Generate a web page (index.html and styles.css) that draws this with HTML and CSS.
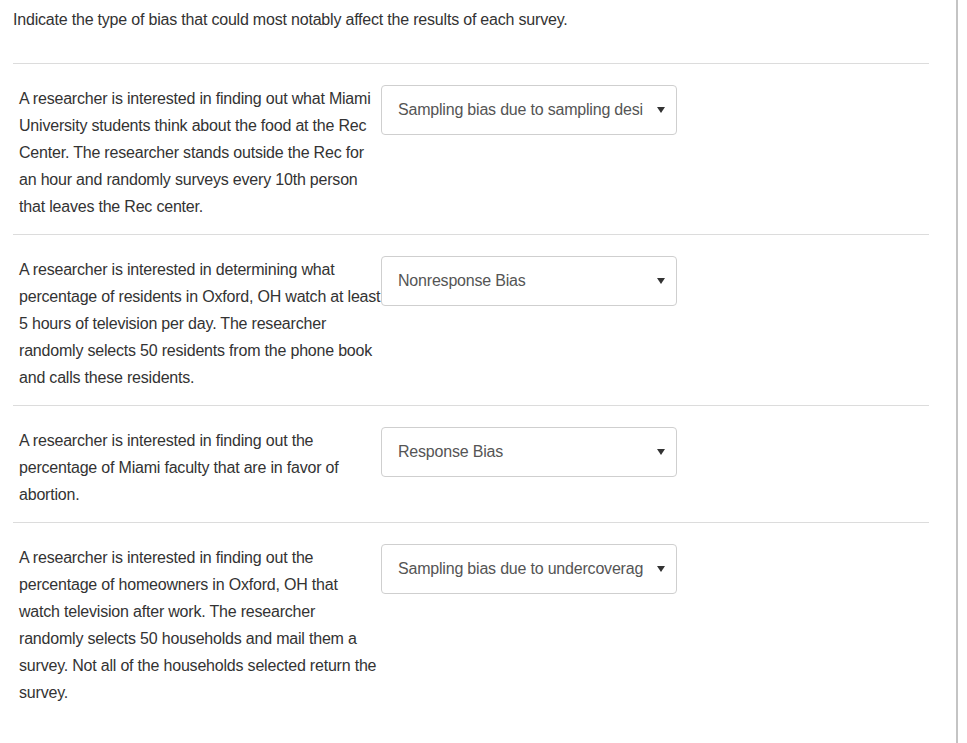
FILE: index.html
```html
<!DOCTYPE html>
<html>
<head>
<meta charset="utf-8">
<link rel="stylesheet" href="styles.css">
</head>
<body>
<div class="page">
  <p class="prompt">Indicate the type of bias that could most notably affect the results of each survey.</p>
  <div class="list">
    <div class="row">
      <div class="question">A researcher is interested in finding out what Miami University students think about the food at the Rec Center. The researcher stands outside the Rec for an hour and randomly surveys every 10th person that leaves the Rec center.</div>
      <div class="select"><span class="value">Sampling bias due to sampling desi</span><span class="arrow"></span></div>
    </div>
    <div class="row">
      <div class="question">A researcher is interested in determining what percentage of residents in Oxford, OH watch at least 5 hours of television per day. The researcher randomly selects 50 residents from the phone book and calls these residents.</div>
      <div class="select"><span class="value">Nonresponse Bias</span><span class="arrow"></span></div>
    </div>
    <div class="row">
      <div class="question">A researcher is interested in finding out the percentage of Miami faculty that are in favor of abortion.</div>
      <div class="select"><span class="value">Response Bias</span><span class="arrow"></span></div>
    </div>
    <div class="row last">
      <div class="question">A researcher is interested in finding out the percentage of homeowners in Oxford, OH that watch television after work. The researcher randomly selects 50 households and mail them a survey. Not all of the households selected return the survey.</div>
      <div class="select"><span class="value">Sampling bias due to undercoverag</span><span class="arrow"></span></div>
    </div>
  </div>
</div>
</body>
</html>
```
FILE: styles.css
```css
html, body {
  margin: 0;
  padding: 0;
  background: #fff;
}
body {
  font-family: "Liberation Sans", Arial, sans-serif;
  color: #333;
  font-size: 16px;
  letter-spacing: -0.2px;
}
.page {
  width: 958px;
  height: 743px;
  box-sizing: border-box;
  border-right: 2px solid #c4c4c4;
  padding: 8px 0 0 13px;
}
.prompt {
  margin: 0;
  line-height: 24px;
  height: 55px;
}
.list {
  width: 916px;
}
.row {
  display: flex;
  align-items: flex-start;
  border-top: 1px solid #dcdcdc;
  padding: 21px 0 14px 6px;
}
.question {
  width: 362px;
  line-height: 27px;
  flex-shrink: 0;
}
.select {
  width: 296px;
  height: 50px;
  box-sizing: border-box;
  border: 1px solid #cfcfcf;
  border-radius: 4px;
  display: flex;
  align-items: center;
  padding: 0 11px 0 16px;
  color: #555;
}
.value {
  flex: 1;
  white-space: nowrap;
  overflow: hidden;
}
.arrow {
  width: 0;
  height: 0;
  border-left: 4px solid transparent;
  border-right: 4px solid transparent;
  border-top: 6px solid #333;
  margin-left: 10px;
}
```
